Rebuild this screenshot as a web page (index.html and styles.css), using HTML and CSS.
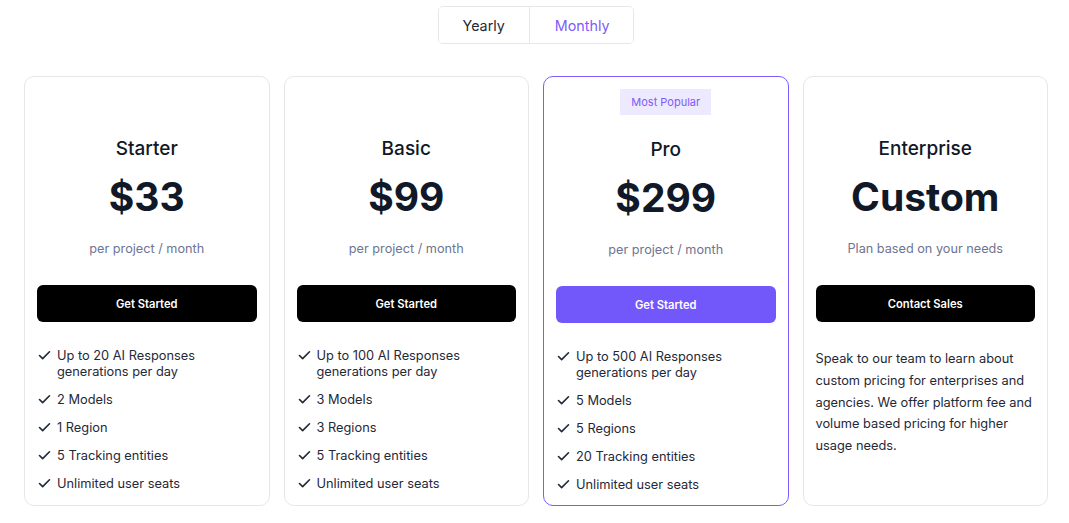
FILE: index.html
```html
<!DOCTYPE html>
<html lang="en">
<head>
<meta charset="utf-8">
<title>Pricing</title>
<link rel="stylesheet" href="styles.css">
</head>
<body>
<main class="page">
  <div class="toggle-row">
    <div class="toggle">
      <button class="seg">Yearly</button>
      <button class="seg active">Monthly</button>
    </div>
  </div>
  <section class="plans">
    <article class="card">
      <div class="badge-slot"></div>
      <h2 class="plan-name">Starter</h2>
      <div class="price">$33</div>
      <p class="per">per project / month</p>
      <button class="cta">Get Started</button>
      <ul class="features">
        <li><svg viewBox="0 0 24 24"><polyline points="20 6 9 17 4 12"/></svg><span>Up to 20 AI Responses generations per day</span></li>
        <li><svg viewBox="0 0 24 24"><polyline points="20 6 9 17 4 12"/></svg><span>2 Models</span></li>
        <li><svg viewBox="0 0 24 24"><polyline points="20 6 9 17 4 12"/></svg><span>1 Region</span></li>
        <li><svg viewBox="0 0 24 24"><polyline points="20 6 9 17 4 12"/></svg><span>5 Tracking entities</span></li>
        <li><svg viewBox="0 0 24 24"><polyline points="20 6 9 17 4 12"/></svg><span>Unlimited user seats</span></li>
      </ul>
    </article>
    <article class="card">
      <div class="badge-slot"></div>
      <h2 class="plan-name">Basic</h2>
      <div class="price">$99</div>
      <p class="per">per project / month</p>
      <button class="cta">Get Started</button>
      <ul class="features">
        <li><svg viewBox="0 0 24 24"><polyline points="20 6 9 17 4 12"/></svg><span>Up to 100 AI Responses generations per day</span></li>
        <li><svg viewBox="0 0 24 24"><polyline points="20 6 9 17 4 12"/></svg><span>3 Models</span></li>
        <li><svg viewBox="0 0 24 24"><polyline points="20 6 9 17 4 12"/></svg><span>3 Regions</span></li>
        <li><svg viewBox="0 0 24 24"><polyline points="20 6 9 17 4 12"/></svg><span>5 Tracking entities</span></li>
        <li><svg viewBox="0 0 24 24"><polyline points="20 6 9 17 4 12"/></svg><span>Unlimited user seats</span></li>
      </ul>
    </article>
    <article class="card popular">
      <div class="badge-slot"><span class="badge">Most Popular</span></div>
      <h2 class="plan-name">Pro</h2>
      <div class="price">$299</div>
      <p class="per">per project / month</p>
      <button class="cta purple">Get Started</button>
      <ul class="features">
        <li><svg viewBox="0 0 24 24"><polyline points="20 6 9 17 4 12"/></svg><span>Up to 500 AI Responses generations per day</span></li>
        <li><svg viewBox="0 0 24 24"><polyline points="20 6 9 17 4 12"/></svg><span>5 Models</span></li>
        <li><svg viewBox="0 0 24 24"><polyline points="20 6 9 17 4 12"/></svg><span>5 Regions</span></li>
        <li><svg viewBox="0 0 24 24"><polyline points="20 6 9 17 4 12"/></svg><span>20 Tracking entities</span></li>
        <li><svg viewBox="0 0 24 24"><polyline points="20 6 9 17 4 12"/></svg><span>Unlimited user seats</span></li>
      </ul>
    </article>
    <article class="card">
      <div class="badge-slot"></div>
      <h2 class="plan-name">Enterprise</h2>
      <div class="price">Custom</div>
      <p class="per">Plan based on your needs</p>
      <button class="cta">Contact Sales</button>
      <p class="blurb">Speak to our team to learn about custom pricing for enterprises and agencies. We offer platform fee and volume based pricing for higher usage needs.</p>
    </article>
  </section>
</main>
</body>
</html>
```

FILE: styles.css
```css
* { box-sizing: border-box; }

body {
  margin: 0;
  background: #ffffff;
  font-family: Inter, "Noto Sans", "Liberation Sans", sans-serif;
  color: #111827;
}

.page {
  padding: 6px 21px 0 24px;
}

.toggle-row {
  display: flex;
  justify-content: center;
}

.toggle {
  display: flex;
  border: 1px solid #e5e7eb;
  border-radius: 5px;
  overflow: hidden;
  height: 38px;
}

.seg {
  font-family: inherit;
  font-size: 14.3px;
  background: #fff;
  border: 0;
  color: #1f2937;
  padding: 0 24px;
  cursor: pointer;
}

.seg + .seg {
  border-left: 1px solid #e5e7eb;
}

.seg.active {
  color: #7c5cfc;
  padding: 0 24px 0 25px;
}

.plans {
  margin-top: 32px;
  display: grid;
  grid-template-columns: repeat(4, 1fr);
  gap: 14px;
}

.card {
  border: 1px solid #e5e7eb;
  border-radius: 10px;
  padding: 12px 12px 12px;
  display: flex;
  flex-direction: column;
  align-items: stretch;
  height: 430px;
}

.card.popular {
  border-color: #7c5cfc;
}

.badge-slot {
  height: 26px;
  display: flex;
  justify-content: center;
}

.badge {
  background: #ede9fe;
  color: #7c5cfc;
  font-size: 11px;
  line-height: 26px;
  padding: 0 11px;
}

.plan-name {
  margin: 20px 0 0;
  text-align: center;
  font-size: 19px;
  line-height: 28px;
  font-weight: 500;
  color: #111827;
}

.popular .plan-name { margin-top: 21px; }

.price {
  margin-top: 10px;
  text-align: center;
  font-size: 39px;
  line-height: 48px;
  font-weight: 700;
  color: #111827;
}

.per {
  margin: 18px 0 0;
  text-align: center;
  font-size: 12.7px;
  line-height: 20px;
  color: #6e7491;
}

.cta {
  margin-top: 26px;
  height: 37px;
  border: 0;
  border-radius: 6px;
  background: #000;
  color: #fff;
  font-family: inherit;
  font-size: 11.2px;
  font-weight: 600;
  cursor: pointer;
}

.cta.purple {
  background: #7258fb;
}

.features {
  list-style: none;
  margin: 26px 0 0;
  padding: 0;
  display: flex;
  flex-direction: column;
  gap: 12px;
}

.features li {
  display: flex;
  align-items: flex-start;
  gap: 5px;
  font-size: 12.8px;
  line-height: 16px;
  color: #1f2937;
}

.features svg {
  width: 15px;
  height: 15px;
  flex: none;
  fill: none;
  stroke: #1f2937;
  stroke-width: 2.6;
  stroke-linecap: round;
  stroke-linejoin: round;
}

.blurb {
  margin: 26px 0 0;
  font-size: 12.8px;
  line-height: 21.75px;
  color: #1f2937;
}
```
